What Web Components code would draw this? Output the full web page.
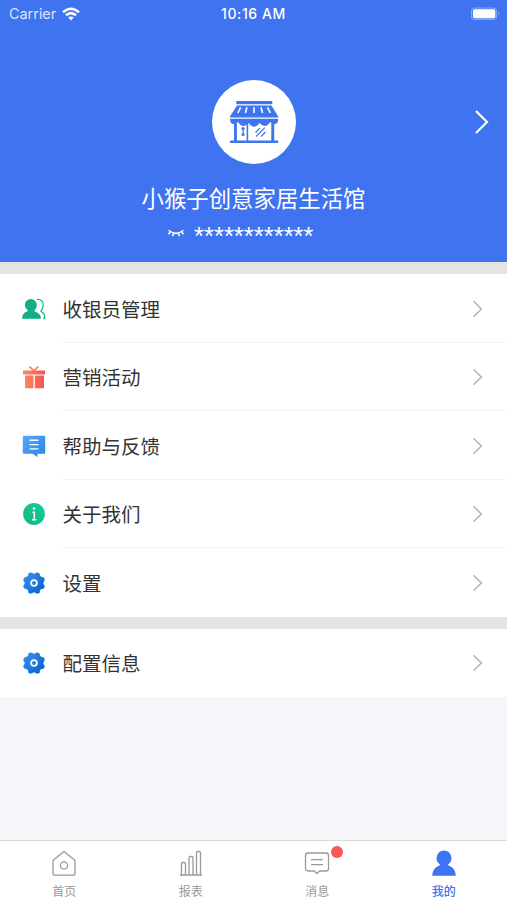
<!DOCTYPE html>
<html lang="zh-CN">
<head>
<meta charset="utf-8">
<title>我的</title>
<style>
  html, body { margin: 0; height: 100%; }
  body {
    font-family: "Liberation Sans", "Noto Sans CJK SC", sans-serif;
    background: #f5f6fa;
    overflow: hidden;
  }
</style>
</head>
<body>
<profile-page></profile-page>

<script>
const ICONS = {
  wifi: [18, 14, `
    <g fill="none" stroke="#fff" stroke-width="2.5">
      <path d="M1 5.2Q9-1.8 17 5.2"/><path d="M4 8.3Q9 4 14 8.3"/>
    </g>
    <path d="M6.2 10.6Q9 8.4 11.8 10.6L9 13.6z" fill="#fff"/>`],
  battery: [31, 14, `
    <rect x="1" y=".5" width="26" height="12.6" rx="3.8" fill="#83a5fa"/>
    <rect x="2" y="1.5" width="24" height="10.6" rx="3" fill="#4c7df4"/>
    <rect x="3" y="2.3" width="22.3" height="9" rx="1.8" fill="#fff"/>
    <path d="M28.4 4.5q2 2.3 0 4.6z" fill="#91affa"/>`],
  shop: [50, 44, `
    <g fill="#3f75ee">
      <path d="M7.3 1h36v3.3h-36z"/>
      <path d="M8 5.5h34.5L49.2 16.4v1.2H1v-1.2z"/>
      <path d="M1 18.8h48.2q0 5.2-3.4 5.2-2.6 0-4.6-2-2.6 4-5.4 4-2.8 0-5.4-3-2.4 3.8-5.3 3.8-2.9 0-5.3-3.8-2.6 3-5.4 3-2.8 0-5.4-4-2 2-4.6 2Q1 24 1 18.8z"/>
      <path d="M5 22h2.9v19H5zM17.6 22h1.6v19h-1.6zM42.3 22h2.9v19h-2.9z"/>
      <rect x=".8" y="40.5" width="48.6" height="2.6" rx="1.3"/>
      <path d="M13.5 28h1.2v7h-1.2z"/><circle cx="14.1" cy="28.6" r="1.6"/><circle cx="14.1" cy="34.5" r="1.6"/>
    </g>
    <path d="M8.8 13l2.8-5.7M16.5 13l1.4-5.7M25 13V7.3M33.5 13l-1.5-5.7M41.4 13l-2.9-5.7" stroke="#fff" stroke-width="1.6"/>
    <path d="M26.5 32.5l4.5-4.5M27 36.5l8.8-8.8M32 36.5l4.5-4.5" stroke="#3f75ee" stroke-width="1.2"/>`],
  eye: [18, 10, `
    <path d="M1.5 2.2Q9 8.5 16.5 2.2M3.2 4.2L1.4 6.3M6.6 5.6L5.5 8.3M11.4 5.6l1.1 2.7M14.8 4.2l1.8 2.1" fill="none" stroke="#fff" stroke-width="1.5"/>`],
  next: [16, 26, `<path d="M2 2l11 11L2 24" fill="none" stroke="#fff" stroke-width="2.2"/>`],
  arrow: [12, 18, `<path d="M1.5 1.3L9.3 9l-7.8 7.7" fill="none" stroke="#b2b2b2" stroke-width="1.5"/>`],
  people: [24, 24, `
    <path d="M15 2.3q6.4-.2 6.2 6.4-.2 3-2 4.7-.5 1 .5 1.5 3 1.2 3 6.6h-1.4" fill="none" stroke="#18b993" stroke-width="1.3"/>
    <path d="M8.8 2a6 6 0 0 1 6 6.2q0 3.300-2.200 5-.6 1 .5 1.500 5.800 1.700 5.800 7H.1q0-5.900 5-7.100 1.100-.5.4-1.500-2.500-1.800-2.600-4.900a6 6 0 0 1 5.900-6.200z" fill="#15ad85"/>`],
  gift: [24, 24, `
    <defs><linearGradient id="g"><stop stop-color="#ff8868"/><stop offset="1" stop-color="#f35250"/></linearGradient></defs>
    <path d="M7.4 1.7l4.5 4 4.5-4" fill="none" stroke="#ff7b66" stroke-width="1.6"/>
    <path d="M1 5.4h22v4H1zM3 10.6h8.4v12.600H4q-1 0-1-1zM12.800 10.600H22v11.600q0 1-1 1h-8.200z" fill="url(#g)"/>`],
  feedback: [24, 24, `
    <defs><linearGradient id="g" x2="1" y2="1"><stop stop-color="#58a9f9"/><stop offset="1" stop-color="#2883e8"/></linearGradient></defs>
    <path d="M1.8 1.7h20.4q1 0 1 1v16q0 1-1 1h-6.7v3.3l-5-3.3H1.8q-1 0-1-1v-16q0-1 1-1z" fill="url(#g)"/>
    <path d="M7.5 6.3h9M7.5 10.6h9M7.5 14.9h9" stroke="#fff" stroke-width="1.4"/>`],
  info: [24, 24, `
    <defs><linearGradient id="g" y1="1" x2="1" y2="0"><stop stop-color="#16b47e"/><stop offset="1" stop-color="#0fd0a0"/></linearGradient></defs>
    <circle cx="12" cy="12" r="10.9" fill="url(#g)"/>
    <circle cx="12" cy="6.5" r="1.2" fill="#fff"/>
    <path d="M10.3 10.2h2v7.3M10 17.8h4.2" fill="none" stroke="#fff" stroke-width="1.4"/>`],
  gear: [24, 24, `
    <defs><linearGradient id="g" gradientUnits="userSpaceOnUse" x1="3" y1="3" x2="21" y2="21"><stop stop-color="#3790ee"/><stop offset="1" stop-color="#0761cd"/></linearGradient></defs>
    <g fill="url(#g)">
      <circle cx="12" cy="12" r="9.5"/>
      <circle cx="8.7" cy="4" r="2.6"/><circle cx="15.3" cy="4" r="2.6"/>
      <circle cx="20" cy="8.7" r="2.6"/><circle cx="20" cy="15.3" r="2.6"/>
      <circle cx="15.3" cy="20" r="2.6"/><circle cx="8.7" cy="20" r="2.6"/>
      <circle cx="4" cy="15.3" r="2.6"/><circle cx="4" cy="8.7" r="2.6"/>
    </g>
    <circle cx="12" cy="12" r="2.9" fill="#2679db" stroke="#fff" stroke-width="1.8"/>`],
  home: [26, 28, `
    <g fill="none" stroke="#999" stroke-width="1.3" stroke-linejoin="round">
      <path d="M13 2.5l10.2 8.3q.8.7.8 1.6v11.8q0 2-2 2H4q-2 0-2-2V12.4q0-.9.8-1.6z"/>
      <circle cx="13" cy="16.5" r="3.6"/>
    </g>`],
  report: [26, 28, `
    <path d="M2 26h22M3.5 26V15q0-1.5 1.5-1.5h1q1.5 0 1.5 1.5v11M11 26V9q0-1.5 1.5-1.5h1Q15 7.5 15 9v17M18.5 26V4q0-1.5 1.5-1.5h1q1.5 0 1.5 1.5v22" fill="none" stroke="#999" stroke-width="1.3"/>`],
  message: [26, 28, `
    <path d="M4 4h18q2.5 0 2.5 2.5v13q0 2.5-2.5 2.5h-6.3L13 24.5 10.3 22H4q-2.5 0-2.5-2.5v-13Q1.5 4 4 4z" fill="none" stroke="#999" stroke-width="1.3" stroke-linejoin="round"/>
    <path d="M7 10.7h12M7 15.7h12" stroke="#999" stroke-width="1.3"/>`],
  mine: [26, 28, `
    <path d="M13 1.5a7.5 7.5 0 0 1 7.5 7.5q0 4-3.2 6.3-.6.7.2 1.2 6.9 2 7.3 10.2H1.2q.4-8.2 7.3-10.2.8-.5.2-1.2Q5.5 13 5.5 9A7.5 7.5 0 0 1 13 1.5z" fill="#3c74f4"/>`]
};

class AppIcon extends HTMLElement {
  constructor() {
    super();
    this.attachShadow({ mode: 'open' });
  }
  connectedCallback() {
    const [w, h, body] = ICONS[this.getAttribute('name')];
    this.shadowRoot.innerHTML = `
      <style>
        :host { display: block; flex: none; }
        svg { display: block; }
      </style>
      <svg width="${w}" height="${h}" viewBox="0 0 ${w} ${h}">${body}</svg>
    `;
  }
}

class StatusBar extends HTMLElement {
  constructor() {
    super();
    this.attachShadow({ mode: 'open' });
    this.shadowRoot.innerHTML = `
      <style>
        :host {
          display: grid;
          grid-template-columns: 1fr auto 1fr;
          align-items: center;
          height: 27px;
          padding: 0 6px 0 9px;
          font: 14.4px/27px Inter, sans-serif;
          color: #fff;
        }
        .carrier { display: flex; align-items: center; gap: 6px; color: #dce6ff; }
        .time { font-size: 14px; font-weight: 500; letter-spacing: 0.6px; margin-right: 3px; }
        .battery { justify-self: end; }
      </style>
      <div class="carrier"><span>Carrier</span><app-icon name="wifi"></app-icon></div>
      <div class="time">10:16 AM</div>
      <app-icon class="battery" name="battery"></app-icon>
    `;
  }
}

class ShopHeader extends HTMLElement {
  constructor() {
    super();
    this.attachShadow({ mode: 'open' });
    this.shadowRoot.innerHTML = `
      <style>
        :host {
          display: block;
          height: 262px;
          background: #3f73f0;
          color: #fff;
        }
        .main {
          display: grid;
          grid-template-columns: 1fr 84px 1fr;
          align-items: center;
          padding: 53px 0 0 1px;
        }
        .avatar {
          grid-column: 2;
          display: flex;
          align-items: center;
          justify-content: center;
          height: 84px;
          border-radius: 50%;
          background: #fff;
        }
        .next { justify-self: end; margin-right: 17px; }
        .name { margin-top: 20px; font-size: 22.4px; line-height: 32px; text-align: center; }
        .secret { display: flex; align-items: center; gap: 9px; height: 34px; margin-left: 167px; }
        .stars { margin-top: 5px; font-size: 25.6px; line-height: 24px; }
      </style>
      <status-bar></status-bar>
      <div class="main">
        <div class="avatar"><app-icon name="shop"></app-icon></div>
        <app-icon class="next" name="next"></app-icon>
      </div>
      <div class="name"><slot></slot></div>
      <div class="secret"><app-icon name="eye"></app-icon><span class="stars">************</span></div>
    `;
  }
}

class MenuRow extends HTMLElement {
  constructor() {
    super();
    this.attachShadow({ mode: 'open' });
    this.shadowRoot.innerHTML = `
      <style>
        :host {
          display: flex;
          align-items: center;
          height: 68.5px;
          padding-left: 22.4px;
          background: #fff;
        }
        .icon { margin-top: 1px; }
        .body {
          flex: 1;
          display: flex;
          align-items: center;
          justify-content: space-between;
          box-sizing: border-box;
          height: 100%;
          margin-left: 16px;
          padding: 1px 23px 0 0;
          border-bottom: 1px solid #f4f4f4;
          font-size: 19.5px;
          color: #333;
        }
        .arrow { margin-top: 1px; }
        :host([last]) .body { border-bottom-color: transparent; }
      </style>
      <app-icon class="icon" name="${this.getAttribute('icon')}"></app-icon>
      <div class="body"><slot></slot><app-icon class="arrow" name="arrow"></app-icon></div>
    `;
  }
}

class MenuGroup extends HTMLElement {
  constructor() {
    super();
    this.attachShadow({ mode: 'open' });
    this.shadowRoot.innerHTML = `
      <style>
        :host { display: block; border-top: 12px solid #e4e4e4; }
      </style>
      <slot></slot>
    `;
  }
}

class TabItem extends HTMLElement {
  constructor() {
    super();
    this.attachShadow({ mode: 'open' });
    this.shadowRoot.innerHTML = `
      <style>
        :host {
          flex: 1;
          display: flex;
          flex-direction: column;
          align-items: center;
          padding-top: 8px;
          font-size: 12px;
          line-height: 18px;
          color: #999;
        }
        :host([active]) { color: #3c74f4; font-weight: 500; }
        .icon { position: relative; margin-bottom: 6px; }
        .dot { display: none; }
        :host([badge]) .dot {
          display: block;
          position: absolute;
          top: -3px;
          left: 27px;
          width: 12px;
          height: 12px;
          border-radius: 50%;
          background: #f85b56;
        }
      </style>
      <div class="icon"><app-icon name="${this.getAttribute('icon')}"></app-icon><i class="dot"></i></div>
      <slot></slot>
    `;
  }
}

class TabBar extends HTMLElement {
  constructor() {
    super();
    this.attachShadow({ mode: 'open' });
    this.shadowRoot.innerHTML = `
      <style>
        :host {
          display: flex;
          box-sizing: border-box;
          height: 60px;
          padding: 0 0 0 1px;
          border-top: 1px solid #d9d9dc;
          background: #fff;
        }
      </style>
      <slot></slot>
    `;
  }
}

class ProfilePage extends HTMLElement {
  constructor() {
    super();
    this.attachShadow({ mode: 'open' });
    this.shadowRoot.innerHTML = `
      <style>
        :host { display: flex; flex-direction: column; height: 900px; }
        tab-bar { margin-top: auto; }
      </style>
      <shop-header>小猴子创意家居生活馆</shop-header>
      <menu-group>
        <menu-row icon="people">收银员管理</menu-row>
        <menu-row icon="gift">营销活动</menu-row>
        <menu-row icon="feedback">帮助与反馈</menu-row>
        <menu-row icon="info">关于我们</menu-row>
        <menu-row icon="gear" last>设置</menu-row>
      </menu-group>
      <menu-group>
        <menu-row icon="gear" last>配置信息</menu-row>
      </menu-group>
      <tab-bar>
        <tab-item icon="home">首页</tab-item>
        <tab-item icon="report">报表</tab-item>
        <tab-item icon="message" badge>消息</tab-item>
        <tab-item icon="mine" active>我的</tab-item>
      </tab-bar>
    `;
  }
}

customElements.define('app-icon', AppIcon);
customElements.define('status-bar', StatusBar);
customElements.define('shop-header', ShopHeader);
customElements.define('menu-row', MenuRow);
customElements.define('menu-group', MenuGroup);
customElements.define('tab-item', TabItem);
customElements.define('tab-bar', TabBar);
customElements.define('profile-page', ProfilePage);
</script>
</body>
</html>
